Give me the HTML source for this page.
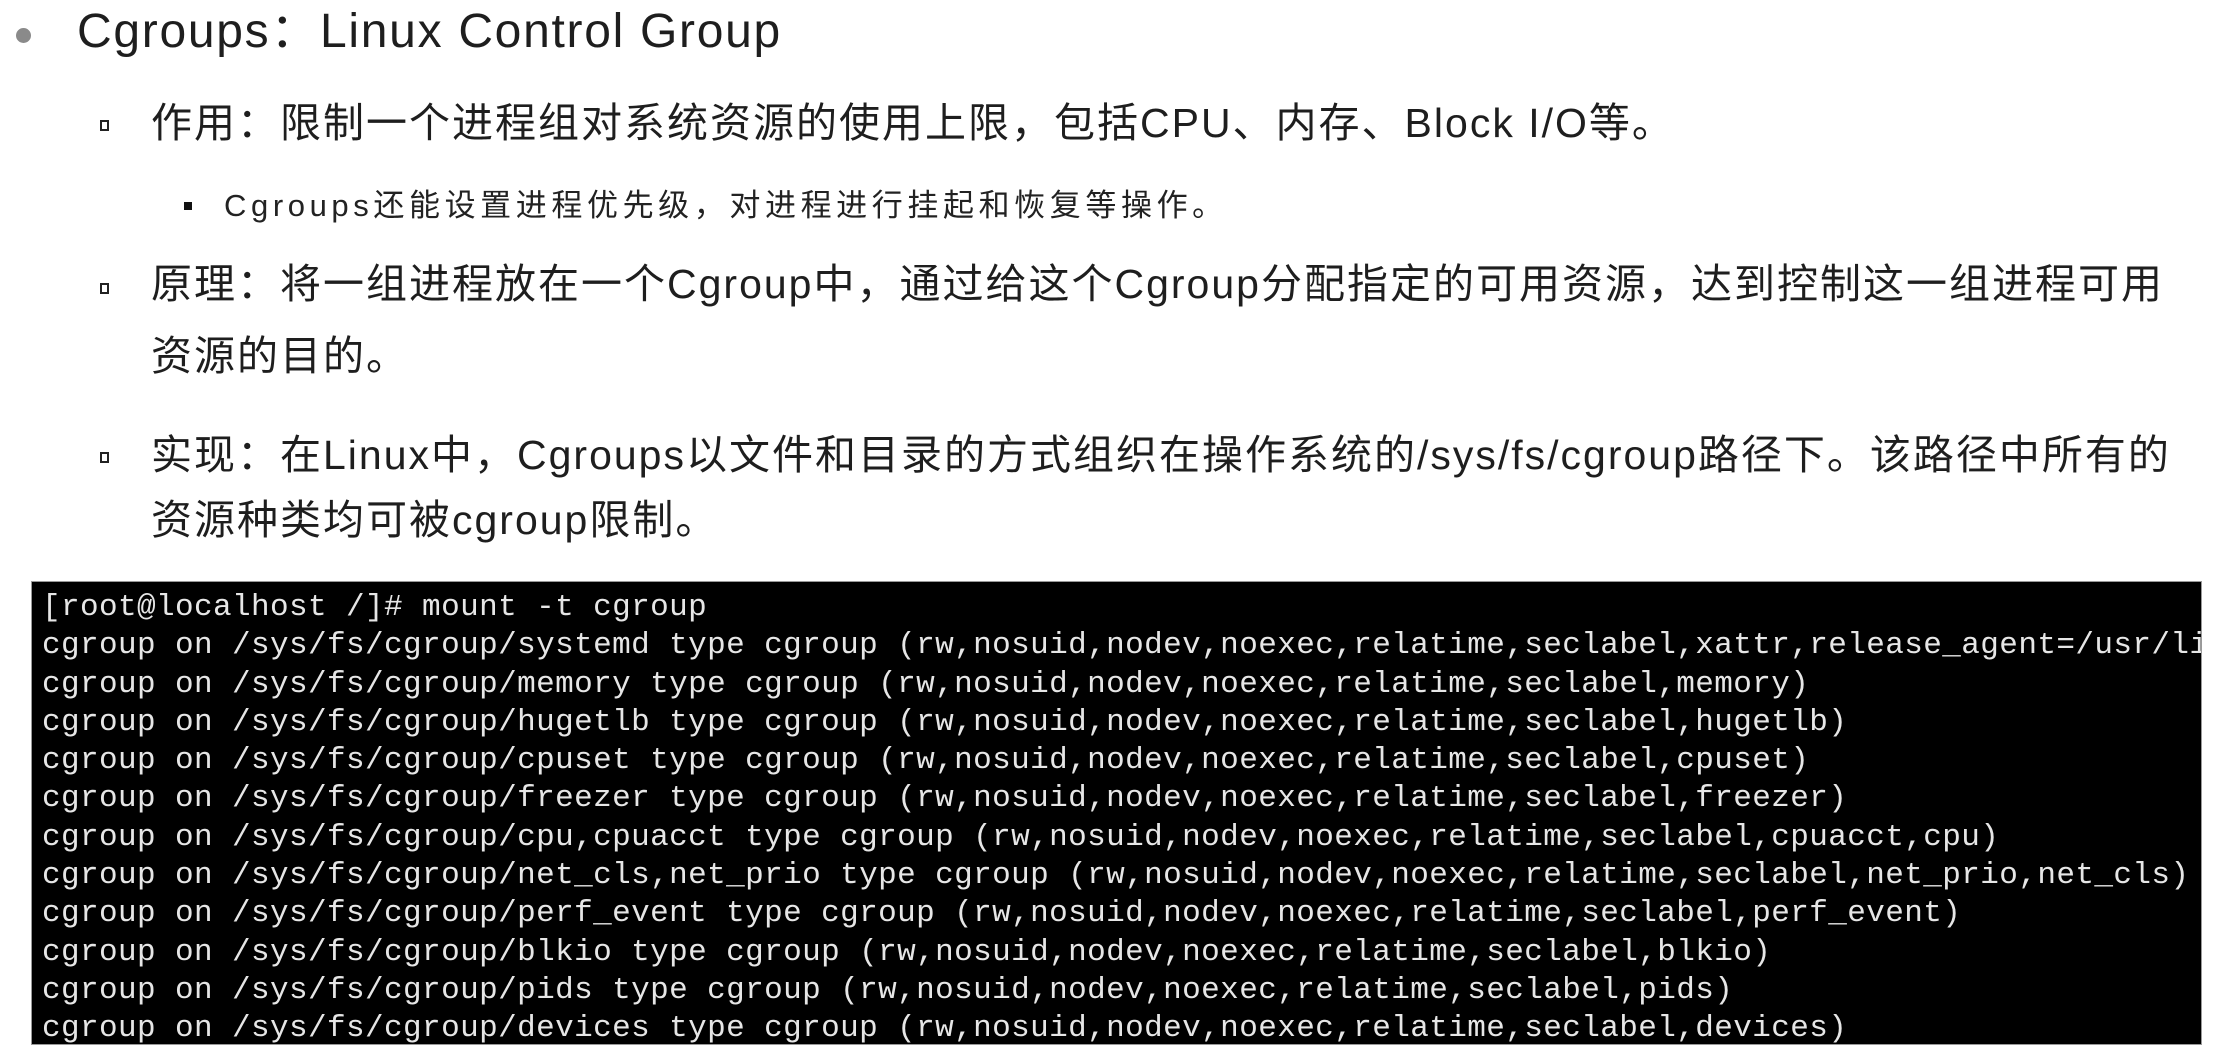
<!DOCTYPE html>
<html><head><meta charset="utf-8"><style>
html,body{margin:0;padding:0;background:#fff;width:2217px;height:1056px;overflow:hidden;position:relative}
.t{position:absolute;white-space:nowrap;color:#1e1e1e;font-family:"Liberation Sans","Noto Sans CJK SC",sans-serif;line-height:1}
.h{font-size:48px;left:77px;top:8px;letter-spacing:1.7px}
.l2{font-size:41px;left:151px;letter-spacing:2.0px}
.l3{font-size:31px;left:224px;top:190px;color:#222;letter-spacing:4.6px}
.dot{position:absolute;left:16px;top:28px;width:15px;height:15px;border-radius:50%;background:#8a8a8a}
.sq{position:absolute;left:100px;width:9px;height:11px;border:2px solid #222;box-sizing:border-box}
.sb{position:absolute;left:184px;top:202px;width:8px;height:8px;background:#111}
.term{position:absolute;left:31px;top:581px;width:2171px;height:464px;background:#000;overflow:hidden;border:1px solid #999;box-sizing:border-box}
.term pre{margin:0;position:absolute;left:10px;top:7px;font-family:"Liberation Mono",monospace;font-size:31px;line-height:38.3px;color:#e6e6e6;letter-spacing:0.4px}
</style></head><body>
<div class="dot"></div>
<div class="t h">Cgroups：Linux Control Group</div>
<div class="sq" style="top:120px"></div>
<div class="t l2" style="top:103px">作用：限制一个进程组对系统资源的使用上限，包括CPU、内存、Block I/O等。</div>
<div class="sb"></div>
<div class="t l3">Cgroups还能设置进程优先级，对进程进行挂起和恢复等操作。</div>
<div class="sq" style="top:283px"></div>
<div class="t l2" style="top:264px">原理：将一组进程放在一个Cgroup中，通过给这个Cgroup分配指定的可用资源，达到控制这一组进程可用</div>
<div class="t l2" style="top:336px">资源的目的。</div>
<div class="sq" style="top:452px"></div>
<div class="t l2" style="top:435px">实现：在Linux中，Cgroups以文件和目录的方式组织在操作系统的/sys/fs/cgroup路径下。该路径中所有的</div>
<div class="t l2" style="top:500px">资源种类均可被cgroup限制。</div>
<div class="term"><pre>[root@localhost /]# mount -t cgroup
cgroup on /sys/fs/cgroup/systemd type cgroup (rw,nosuid,nodev,noexec,relatime,seclabel,xattr,release_agent=/usr/lib
cgroup on /sys/fs/cgroup/memory type cgroup (rw,nosuid,nodev,noexec,relatime,seclabel,memory)
cgroup on /sys/fs/cgroup/hugetlb type cgroup (rw,nosuid,nodev,noexec,relatime,seclabel,hugetlb)
cgroup on /sys/fs/cgroup/cpuset type cgroup (rw,nosuid,nodev,noexec,relatime,seclabel,cpuset)
cgroup on /sys/fs/cgroup/freezer type cgroup (rw,nosuid,nodev,noexec,relatime,seclabel,freezer)
cgroup on /sys/fs/cgroup/cpu,cpuacct type cgroup (rw,nosuid,nodev,noexec,relatime,seclabel,cpuacct,cpu)
cgroup on /sys/fs/cgroup/net_cls,net_prio type cgroup (rw,nosuid,nodev,noexec,relatime,seclabel,net_prio,net_cls)
cgroup on /sys/fs/cgroup/perf_event type cgroup (rw,nosuid,nodev,noexec,relatime,seclabel,perf_event)
cgroup on /sys/fs/cgroup/blkio type cgroup (rw,nosuid,nodev,noexec,relatime,seclabel,blkio)
cgroup on /sys/fs/cgroup/pids type cgroup (rw,nosuid,nodev,noexec,relatime,seclabel,pids)
cgroup on /sys/fs/cgroup/devices type cgroup (rw,nosuid,nodev,noexec,relatime,seclabel,devices)</pre></div>
</body></html>
